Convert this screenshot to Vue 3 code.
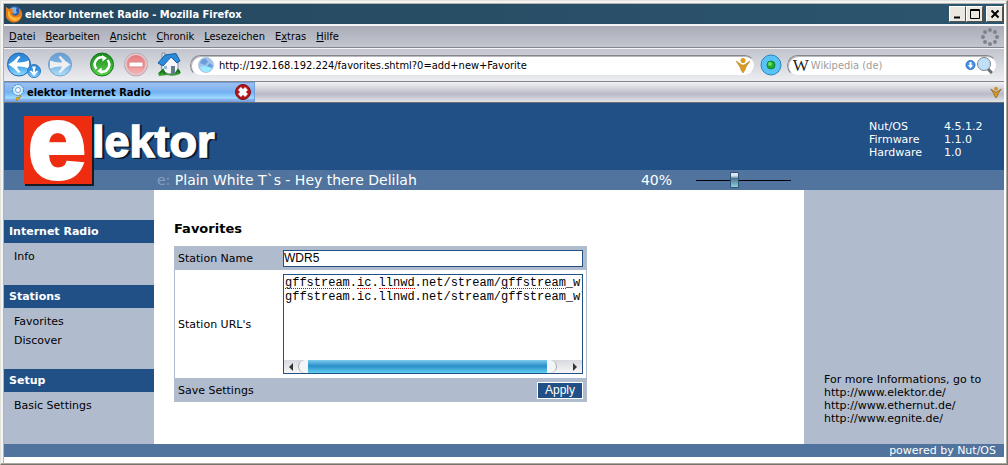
<script setup>
import { ref } from 'vue'

const menus = [
  { key: 'D', before: '', after: 'atei' },
  { key: 'B', before: '', after: 'earbeiten' },
  { key: 'A', before: '', after: 'nsicht' },
  { key: 'C', before: '', after: 'hronik' },
  { key: 'L', before: '', after: 'esezeichen' },
  { key: 'x', before: 'E', after: 'tras' },
  { key: 'H', before: '', after: 'ilfe' },
]

const versions = [
  ['Nut/OS', '4.5.1.2'],
  ['Firmware', '1.1.0'],
  ['Hardware', '1.0'],
]

const sections = [
  { title: 'Internet Radio', items: ['Info'] },
  { title: 'Stations', items: ['Favorites', 'Discover'] },
  { title: 'Setup', items: ['Basic Settings'] },
]

const sites = ['http://www.elektor.de/', 'http://www.ethernut.de/', 'http://www.egnite.de/']

const address = ref('http://192.168.192.224/favorites.shtml?0=add+new+Favorite')
const search = ref('')
const volume = ref(40)
const stationName = ref('WDR5')
const stationUrls = ref(
  'gffstream.ic.llnwd.net/stream/gffstream_wl9\ngffstream.ic.llnwd.net/stream/gffstream_wl9'
)

// Start column and length of each word flagged by the spell checker
const misspelled = [
  [0, 9],
  [10, 2],
  [13, 5],
  [30, 9],
]

const spinnerDots = Array.from({ length: 8 }, (_, i) => {
  const a = (i * Math.PI) / 4
  return { x: 9 + 7 * Math.cos(a), y: 9 + 7 * Math.sin(a) }
})
</script>

<template>
  <div class="window">
    <header class="titlebar">
      <svg class="fox" width="18" height="18" viewBox="0 0 18 18" aria-hidden="true">
        <circle cx="9.500" cy="8.500" r="7.500" fill="#2c5fae" />
        <path d="M5 4Q8 1 12 3Q10 5 12 8L9 9Z" fill="#7fb4ea" />
        <path d="M1 2L4 4Q6 3 8 4L7 6L9 7L7 9Q9 12 13 10Q15 8 14 3Q18 7 17 11Q15 18 8 17.500Q0 16 1 8Z" fill="#ea7b14" />
        <path d="M3 6Q2 14 9 16Q14 16 16 11Q12 14 8 12Q4 10 5 7Z" fill="#fbb83c" />
      </svg>
      <span class="caption">elektor Internet Radio - Mozilla Firefox</span>
      <div class="controls">
        <button type="button" aria-label="Minimize">
          <svg width="16" height="14" viewBox="0 0 16 14"><path d="M4 10.500H10" stroke="#000" stroke-width="2" /></svg>
        </button>
        <button type="button" aria-label="Maximize">
          <svg width="16" height="14" viewBox="0 0 16 14"><path d="M3.500 2.500H12.500V11.500H3.500ZM3 3.500H13" fill="none" stroke="#000" /></svg>
        </button>
        <button type="button" class="close" aria-label="Close">
          <svg width="16" height="14" viewBox="0 0 16 14"><path d="M4.500 3.500L11.500 10.500M11.500 3.500L4.500 10.500" stroke="#000" stroke-width="2" /></svg>
        </button>
      </div>
    </header>

    <nav class="menubar">
      <button v-for="m in menus" :key="m.key" type="button">{{ m.before }}<u>{{ m.key }}</u>{{ m.after }}</button>
      <svg class="spinner" width="18" height="18" viewBox="0 0 18 18" aria-hidden="true">
        <circle v-for="(d, i) in spinnerDots" :key="i" :cx="d.x" :cy="d.y" r="2" fill="#7f828b" />
      </svg>
    </nav>

    <div class="toolbar">
      <svg width="0" height="0" class="defs" aria-hidden="true">
        <defs>
          <linearGradient id="blue" x1="0" y1="0" x2="0" y2="1">
            <stop offset="0" stop-color="#2d82cf" /><stop offset="0.500" stop-color="#3c9be6" /><stop offset="1" stop-color="#8fdcff" />
          </linearGradient>
          <linearGradient id="green" x1="0" y1="0" x2="0" y2="1">
            <stop offset="0" stop-color="#17891c" /><stop offset="1" stop-color="#5ed04e" />
          </linearGradient>
          <linearGradient id="pink" x1="0" y1="0" x2="0" y2="1">
            <stop offset="0" stop-color="#e37a80" /><stop offset="1" stop-color="#f4b1b0" />
          </linearGradient>
        </defs>
      </svg>
      <button type="button" class="back" aria-label="Back">
        <svg width="34" height="26" viewBox="0 0 34 26">
          <circle cx="12" cy="12.500" r="11.500" fill="url(#blue)" stroke="#2068b4" />
          <path d="M1.500 12.500Q7 9.500 11.500 4L13.500 5Q10.500 8 10 10.500Q16 11 22 8.500V16.500Q16 14 10 14.500Q10.500 17 13.500 20L11.500 21Q7 15.500 1.500 12.500Z" fill="#fff" />
          <circle cx="27" cy="19" r="6.500" fill="url(#blue)" stroke="#2f7ac4" />
          <path d="M27 24L23 19.500L24 18.500L26 20Q26.500 17 25 14.500H29Q27.500 17 28 20L30 18.500L31 19.500Z" fill="#fff" />
        </svg>
      </button>
      <button type="button" class="forward" aria-label="Forward">
        <svg width="24" height="26" viewBox="0 0 24 26" opacity="0.600">
          <circle cx="12" cy="12.500" r="11.500" fill="url(#blue)" stroke="#2f7ac4" />
          <path d="M22.500 12.500Q17 9.500 12.500 4L10.500 5Q13.500 8 14 10.500Q8 11 2 8.500V16.500Q8 14 14 14.500Q13.500 17 10.500 20L12.500 21Q17 15.500 22.500 12.500Z" fill="#fff" />
        </svg>
      </button>
      <button type="button" class="reload" aria-label="Reload">
        <svg width="24" height="26" viewBox="0 0 24 26">
          <circle cx="12" cy="12.500" r="11.500" fill="url(#green)" stroke="#137c19" />
          <path d="M6.500 17A7 7 0 0 1 13 5.500M17.500 8A7 7 0 0 1 11 19.500" fill="none" stroke="#fff" stroke-width="2.500" />
          <path d="M12 3L17 6L12.500 9.500ZM12 22L7 19L11.500 15.500Z" fill="#fff" />
        </svg>
      </button>
      <button type="button" class="stop" aria-label="Stop">
        <svg width="24" height="26" viewBox="0 0 24 26">
          <circle cx="12" cy="12.500" r="11.500" fill="#e2c9cf" stroke="#bfa5ad" />
          <circle cx="12" cy="12.500" r="9.500" fill="url(#pink)" />
          <rect x="5" y="10" width="14" height="5" fill="#fff" stroke="#dd8286" />
        </svg>
      </button>
      <button type="button" class="home" aria-label="Home">
        <svg width="24" height="26" viewBox="0 0 24 26">
          <path d="M1 21Q6 16 12 19L23 18V22Q16 25 10 23L2 24Z" fill="#399a2e" />
          <path d="M4 11L13 4L21 11V20L12 22L5 19Z" fill="#f3f5f8" stroke="#8591a0" />
          <path d="M5 1H8V8H5Z" fill="#d9e2ea" stroke="#8a949e" />
          <path d="M1 11L8 3L19 1.500L23 9L20 11L14 5L6 14Z" fill="#2a8adb" stroke="#1a5c9e" />
          <path d="M14 14H18V21L14 22Z" fill="#66788c" />
          <path d="M7 14H10V17H7Z" fill="#8db8df" />
          <path d="M3 21L6 18L8 22M19 21L21 18L23 21" fill="none" stroke="#17751c" stroke-width="2" />
        </svg>
      </button>
      <div class="field location">
        <svg width="16" height="16" viewBox="0 0 16 16" aria-hidden="true">
          <circle cx="8" cy="8" r="7.500" fill="#9fc4ee" stroke="#b5c6e2" />
          <path d="M2 6Q4 1 8 2L10 5L7 8L4 7ZM9 9L12 6L15 9Q13 13 10 12Z" fill="#6c9cda" />
          <path d="M2 10Q8 8 14 11Q12 15 8 15Q4 15 2 10Z" fill="#98ebff" />
        </svg>
        <input v-model="address" type="text" aria-label="Address" spellcheck="false" />
        <svg width="16" height="16" viewBox="0 0 16 16" aria-hidden="true">
          <circle cx="8" cy="3.500" r="2.500" fill="#dd9b1c" />
          <path d="M1 4L7 8H9L15 4L11 10L10 13L8 16L6 13L5 10Z" fill="#dc9b20" stroke="#a8761d" stroke-width="0.500" />
        </svg>
      </div>
      <button type="button" class="go" aria-label="Go">
        <svg width="22" height="22" viewBox="0 0 22 22">
          <circle cx="11" cy="11" r="10" fill="#59c3f6" stroke="#2487c0" />
          <circle cx="11" cy="11" r="4" fill="#1fa833" stroke="#13872a" />
          <circle cx="10" cy="10" r="2" fill="#6be065" />
        </svg>
      </button>
      <div class="field search">
        <span class="wiki" aria-hidden="true">W</span>
        <input v-model="search" type="text" placeholder="Wikipedia (de)" aria-label="Search" />
        <svg width="28" height="18" viewBox="0 0 28 18" aria-hidden="true">
          <circle cx="5.500" cy="9" r="4.500" fill="#4594e8" stroke="#2d6fc2" />
          <path d="M5.500 12.500L3 9H4.500V6H6.500V9H8Z" fill="#fff" />
          <path d="M22 12L27 17" stroke="#666c72" stroke-width="3" />
          <circle cx="19" cy="8" r="6.500" fill="#bfe0f6" stroke="#7c8792" />
        </svg>
      </div>
    </div>

    <div class="tabstrip">
      <div class="tab">
        <svg width="14" height="17" viewBox="0 0 14 17" aria-hidden="true">
          <path d="M7 10L10 12L6 17L5 14L9 13" fill="#f3c22c" stroke="#b48b15" />
          <circle cx="7" cy="6" r="5.500" fill="#d3ebfa" stroke="#3283c4" stroke-dasharray="2 1" />
          <circle cx="7" cy="6" r="2.500" fill="#fff" stroke="#6ba6d5" />
        </svg>
        <span>elektor Internet Radio</span>
        <button type="button" aria-label="Close tab">
          <svg width="16" height="16" viewBox="0 0 16 16">
            <circle cx="8" cy="8" r="7.500" fill="#b5161d" stroke="#7d0e16" />
            <path d="M4.500 4.500L11.500 11.500M11.500 4.500L4.500 11.500" stroke="#fff" stroke-width="4" />
          </svg>
        </button>
      </div>
      <svg class="alltabs" width="12" height="12" viewBox="0 0 16 16" aria-hidden="true">
        <circle cx="8" cy="3.500" r="2.500" fill="#d0921e" />
        <path d="M1 4L7 8H9L15 4L11 10L10 13L8 16L6 13L5 10Z" fill="#d8981f" stroke="#8d641d" />
      </svg>
    </div>

    <div class="page">
      <div class="banner">
        <svg class="logo" width="200" height="75" viewBox="0 0 200 75" role="img" aria-label="elektor">
          <rect x="1" y="1" width="69" height="69" fill="#1a1a22" />
          <rect x="0" y="0" width="68" height="68" fill="#ee2c0f" />
          <g font-family="Liberation Sans, Arial, sans-serif" font-weight="bold">
            <text x="4" y="62" font-size="104" fill="#fff" stroke="#fff" stroke-width="4">e</text>
            <g font-size="45">
              <text x="70" y="42" fill="#0c1d33" stroke="#0c1d33" stroke-width="2">lektor</text>
              <text x="68" y="41" fill="#fff" stroke="#fff" stroke-width="1.500">lektor</text>
            </g>
          </g>
        </svg>
        <dl class="versions">
          <template v-for="[name, value] in versions" :key="name">
            <dt>{{ name }}</dt>
            <dd>{{ value }}</dd>
          </template>
        </dl>
      </div>

      <div class="ticker">
        <p><span class="faded">e:</span> Plain White T`s - Hey there Delilah</p>
        <label for="volume">{{ volume }}%</label>
        <input id="volume" v-model="volume" type="range" min="0" max="100" />
      </div>

      <div class="columns">
        <nav class="sidebar">
          <section v-for="s in sections" :key="s.title">
            <h2>{{ s.title }}</h2>
            <ul>
              <li v-for="i in s.items" :key="i"><a href="#">{{ i }}</a></li>
            </ul>
          </section>
        </nav>

        <main>
          <h1>Favorites</h1>
          <form @submit.prevent>
            <div class="row shaded">
              <label for="station">Station Name</label>
              <input id="station" v-model="stationName" type="text" spellcheck="false" />
            </div>
            <div class="row">
              <label for="urls">Station URL's</label>
              <div class="urlbox">
                <div class="text">
                  <textarea id="urls" v-model="stationUrls" wrap="off" spellcheck="false"></textarea>
                  <i
                    v-for="[start, length] in misspelled"
                    :key="start"
                    :style="{ left: `calc(1px + ${start}ch)`, width: `${length}ch` }"
                  ></i>
                </div>
                <div class="scrollbar" aria-hidden="true">
                  <svg width="14" height="12" viewBox="0 0 14 12"><path d="M9 2V10L5 6Z" fill="#333" /></svg>
                  <div class="track"><div class="thumb"></div></div>
                  <svg width="14" height="12" viewBox="0 0 14 12"><path d="M5 2V10L9 6Z" fill="#333" /></svg>
                </div>
              </div>
            </div>
            <div class="row shaded">
              <span>Save Settings</span>
              <button type="submit">Apply</button>
            </div>
          </form>
        </main>

        <aside>
          <p>For more Informations, go to</p>
          <a v-for="s in sites" :key="s" :href="s">{{ s }}</a>
        </aside>
      </div>

      <footer>powered by Nut/OS</footer>
    </div>
  </div>
</template>

<style>
body {
  background: #d8d6d0;
}
</style>

<style scoped>
* {
  box-sizing: border-box;
  margin: 0;
  padding: 0;
}
button,
input,
textarea {
  border: 0;
  background: none;
  font: inherit;
  color: inherit;
  outline: 0;
}
svg {
  display: block;
  flex: none;
}
a {
  color: inherit;
  text-decoration: none;
}
.window {
  display: flex;
  flex-direction: column;
  min-height: 100vh;
  padding: 3px 3px 4px;
  border: 1px solid;
  border-color: #e4e2dc #77746c #77746c #e4e2dc;
  background: #fff;
  box-shadow: inset -1px -1px #aaa8a0, inset 2px 2px #f4f4f2, inset 3px 3px #b5b4b0;
  font: 11px/13px "DejaVu Sans Condensed", "DejaVu Sans", sans-serif;
  color: #000;
}

.titlebar {
  display: flex;
  align-items: center;
  height: 20px;
  padding: 0 1px;
  background: linear-gradient(90deg, #24475f, #2c566e);
  color: #fff;
}
.caption {
  flex: 1;
  padding-left: 2px;
  font-weight: bold;
}
.controls {
  display: flex;
}
.controls button {
  width: 17px;
  height: 16px;
  border: 1px solid;
  border-color: #fff #55534e #55534e #fff;
  background: #eae8e1;
}
.controls .close {
  margin-left: 3px;
}

.menubar {
  display: flex;
  align-items: center;
  gap: 10px;
  height: 24px;
  padding: 0 5px;
  border-top: 2px solid #f4f4f6;
  border-bottom: 1px solid #85868c;
  background: linear-gradient(#aaacb8, #c3c5cf);
}
.spinner {
  margin-left: auto;
}

.toolbar {
  display: flex;
  align-items: center;
  height: 34px;
  padding: 0 7px 0 3px;
  border-top: 1px solid #f4f4f6;
  border-bottom: 1px solid #85868c;
  background: linear-gradient(#c2c4ce, #eceef1);
}
.defs {
  position: absolute;
}
.forward {
  margin-left: 7px;
}
.reload {
  margin-left: 18px;
}
.stop {
  margin-left: 10px;
}
.home {
  margin-left: 9px;
}
.field {
  display: flex;
  align-items: center;
  height: 21px;
  border: 1px solid;
  border-color: #85868c #d4d5da #e4e5e8 #85868c;
  border-radius: 11px;
  background: #fff;
  box-shadow: inset 1px 1px #b9bac0;
}
.field input {
  flex: 1;
  min-width: 0;
  height: 17px;
}
.field input::placeholder {
  color: #a09d99;
  opacity: 1;
}
.location {
  flex: 569;
  margin-left: 9px;
  padding: 0 3px 0 7px;
}
.location input {
  padding-left: 5px;
}
.go {
  margin: 0 5px;
}
.search {
  flex: 206;
  padding: 0 3px 0 5px;
}
.wiki {
  width: 18px;
  font: 17px/17px "Liberation Serif", serif;
  color: #222;
}

.tabstrip {
  display: flex;
  align-items: center;
  justify-content: space-between;
  height: 21px;
  padding-right: 2px;
  border-bottom: 1px solid #6d6e76;
  background: linear-gradient(#f2f2f5, #b9bac7 60%, #e2e3e8);
}
.tab {
  display: flex;
  align-items: center;
  width: 251px;
  height: 20px;
  padding: 0 3px 0 6px;
  border: 1px solid #6f9fdc;
  background: linear-gradient(#9dc0f0 0, #7cb2f0 45%, #6fb0f2 50%, #a0dcff 85%, #86aee9 90%);
  font-weight: bold;
}
.tab span {
  flex: 1;
  padding-left: 2px;
}

.page {
  display: flex;
  flex: 1;
  flex-direction: column;
  font-family: "DejaVu Sans", Verdana, sans-serif;
}
.banner {
  position: relative;
  display: flex;
  justify-content: flex-end;
  height: 67px;
  padding: 17px 0 0;
  background: #215086;
  color: #fff;
}
.logo {
  position: absolute;
  top: 13px;
  left: 20px;
  overflow: visible;
}
.versions {
  display: grid;
  grid-template-columns: 75px 60px;
  align-content: start;
}
.ticker {
  display: flex;
  align-items: center;
  height: 20px;
  padding: 0 213px 0 153px;
  background: #50749e;
  font-size: 14px;
  line-height: 20px;
  color: #fff;
}
.ticker p {
  flex: 1;
}
.faded {
  opacity: 0.3;
}
.ticker input {
  width: 95px;
  height: 18px;
  margin-left: 24px;
  appearance: none;
  background: linear-gradient(#000, #000) center / 100% 1px no-repeat;
}
.ticker input::-webkit-slider-thumb {
  width: 9px;
  height: 16px;
  appearance: none;
  border: 1px solid #2f5278;
  border-radius: 1px;
  background: linear-gradient(#e4ecf2 0, #d4e0e8 20%, #4d7590 40%, #8fd0d8);
}

.columns {
  display: flex;
  flex: 1;
}
.sidebar {
  width: 150px;
  padding-top: 30px;
  background: #b1bbce;
}
.sidebar h2 {
  padding: 5px;
  background: #215086;
  font-size: 11px;
  line-height: 13px;
  color: #fff;
}
.sidebar ul {
  padding: 4px 10px 19px;
  list-style: none;
}
.sidebar li {
  line-height: 19px;
}
main {
  flex: 1;
  padding: 31px 20px;
  background: #fff;
}
h1 {
  margin-bottom: 9px;
  font-size: 13px;
  line-height: 16px;
}
form {
  max-width: 413px;
  border: 1px solid #b1bbce;
  border-width: 0 1px;
}
.row {
  display: flex;
  align-items: center;
  padding: 4px 3px;
}
.row > :first-child {
  flex: 1;
}
.shaded {
  height: 24px;
  background: #b1bbce;
}
.row input,
.urlbox {
  width: 300px;
  border: 1px solid #215086;
  background: #fff;
}
.row input {
  height: 17px;
  font-family: "Liberation Sans", Arial, sans-serif;
  font-size: 12px;
}
.urlbox {
  height: 100px;
  font: 12px/14px "Liberation Mono", monospace;
}
.text {
  position: relative;
  height: 85px;
  overflow: hidden;
}
textarea {
  display: block;
  width: 100%;
  height: 100%;
  padding: 1px 0 1px 1px;
  overflow: hidden;
  resize: none;
}
.text i {
  position: absolute;
  top: 13px;
  border-bottom: 1px dotted #e00000;
}
.scrollbar {
  display: flex;
  align-items: center;
  height: 13px;
  background: linear-gradient(#d8d9df, #f6f6f8);
}
.track {
  flex: 1;
  height: 13px;
}
.thumb {
  width: 96%;
  height: 13px;
  border: solid #a7a8ad;
  border-width: 0 1px;
  border-radius: 7px;
  background:
    linear-gradient(#7fcdee, #2b8fc9 45%, #3398d0 55%, #62d0f2) center / calc(100% - 18px) 100% no-repeat,
    #f4f5f7;
}
.row button {
  width: 46px;
  height: 17px;
  border: 1px solid #fff;
  background: #215086;
  font-family: "Liberation Sans", Arial, sans-serif;
  font-size: 12px;
  color: #fff;
}
aside {
  display: flex;
  flex-direction: column;
  justify-content: flex-end;
  align-items: flex-start;
  width: 200px;
  padding: 0 0 19px 20px;
  background: #b1bbce;
  white-space: nowrap;
}
footer {
  margin-bottom: 3px;
  padding-right: 8px;
  background: #50749e;
  text-align: right;
  color: #fff;
}
</style>
